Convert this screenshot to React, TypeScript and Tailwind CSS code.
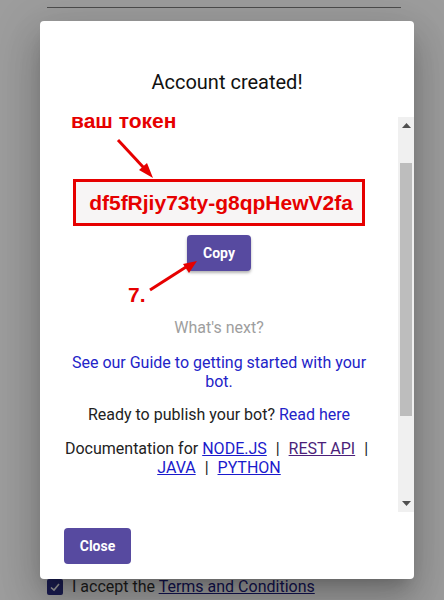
import React from "react";

// fake scrollbar, drawn because headless chrome has no classic bars
const ScrollBar: React.FC = () => (
  <div className="flex w-4 flex-col bg-[#f0f0f0]">
    <div className="flex h-[17px] items-center justify-center">
      <svg width="9" height="5" viewBox="0 0 9 5">
        <path d="M0 5 L4.5 0 L9 5 Z" fill="#505050" />
      </svg>
    </div>
    <div className="h-[29px]" />
    <div className="mx-[2px] h-[253px] bg-[#bdbdbd]" />
    <div className="flex-1" />
    <div className="flex h-[17px] items-center justify-center">
      <svg width="9" height="5" viewBox="0 0 9 5">
        <path d="M0 0 L4.5 5 L9 0 Z" fill="#505050" />
      </svg>
    </div>
  </div>
);

const Sep: React.FC = () => <span className="mx-[5px] text-[#222]">|</span>;

const App: React.FC = () => {
  return (
    <div className="relative h-[600px] w-[444px] overflow-hidden bg-[#9d9d9d] font-['Roboto',sans-serif]">
      {/* page behind the dialog */}
      <div className="flex h-full flex-col justify-between px-[47px]">
        <div className="mt-[7px] h-px w-[354px] bg-[#4d4d4d]" />
        <div className="mb-[3px] flex items-center gap-[9px]">
          <div className="flex h-4 w-4 items-center justify-center rounded-[2px] bg-[#1b1d52]">
            <svg width="12" height="12" viewBox="0 0 12 12">
              <path d="M2 6.5 L5 9 L10 3" stroke="#9d9d9d" strokeWidth="1.6" fill="none" />
            </svg>
          </div>
          <span className="text-[16px] leading-[20px] text-[#1c1c1c]">
            I accept the{" "}
            <span className="text-[#12124f] underline">Terms and Conditions</span>
          </span>
        </div>
      </div>

      {/* dialog */}
      <div className="absolute left-[40px] top-[21px] flex h-[558px] w-[374px] flex-col rounded-[4px] bg-white shadow-[0_11px_15px_-7px_rgba(0,0,0,0.2),0_24px_38px_3px_rgba(0,0,0,0.14),0_9px_46px_8px_rgba(0,0,0,0.12)]">
        <div className="flex h-[96px] items-end justify-center pb-[23px]">
          <h2 className="text-[20px] leading-[24px] text-[#111]">Account created!</h2>
        </div>

        <div className="flex h-[395px]">
          <div className="flex flex-1 flex-col items-center px-[24px] pt-[62px] text-center text-[16px] leading-[19px]">
            <div className="flex h-[47px] w-[292px] shrink-0 items-center justify-center border-[3px] border-[#e60000] bg-[#f7f5f5] pl-[4px]">
              <span className="font-['Liberation_Sans',Arial,sans-serif] text-[21px] font-bold text-[#e60000]">
                df5fRjiy73ty-g8qpHewV2fa
              </span>
            </div>
            <button className="mt-[9px] h-[36px] w-[64px] rounded-[4px] bg-[#574aa0] text-[14px] font-bold text-white shadow-[0_2px_3px_rgba(0,0,0,0.3)]">
              Copy
            </button>
            <p className="mt-[47px] text-[#9e9e9e]">What's next?</p>
            <p className="mt-[16px] text-[#2323c8]">
              See our Guide to getting started with your bot.
            </p>
            <p className="mt-[14px] text-[#222]">
              Ready to publish your bot? <span className="text-[#2323c8]">Read here</span>
            </p>
            <p className="mt-[15px] text-[#222]">
              Documentation for <span className="text-[#1a1acc] underline">NODE.JS</span>{" "}
              <Sep /> <span className="text-[#4b1f7a] underline">REST API</span> <Sep />{" "}
              <span className="text-[#1a1acc] underline">JAVA</span> <Sep />{" "}
              <span className="text-[#1a1acc] underline">PYTHON</span>
            </p>
          </div>
          <ScrollBar />
        </div>

        <div className="flex flex-1 items-start px-[24px] pt-[16px]">
          <button className="h-[36px] w-[67px] rounded-[4px] bg-[#574aa0] text-[14px] font-bold text-white">
            Close
          </button>
        </div>

        {/* red annotations */}
        <span className="absolute left-[31px] top-[88px] font-['Liberation_Sans',Arial,sans-serif] text-[21px] font-bold leading-[24px] text-[#e60000]">
          ваш токен
        </span>
        <span className="absolute left-[88px] top-[262px] font-['Liberation_Sans',Arial,sans-serif] text-[21px] font-bold leading-[24px] text-[#e60000]">
          7.
        </span>
        <svg className="pointer-events-none absolute left-0 top-0" width="374" height="558">
          <line x1="78" y1="119" x2="104" y2="147" stroke="#e60000" strokeWidth="3" />
          <path d="M113 157 L99 149 L107 142 Z" fill="#e60000" />
          <line x1="110" y1="269" x2="146" y2="246" stroke="#e60000" strokeWidth="3" />
          <path d="M157 240 L149 252 L143 243 Z" fill="#e60000" />
        </svg>
      </div>
    </div>
  );
};

export default App;
